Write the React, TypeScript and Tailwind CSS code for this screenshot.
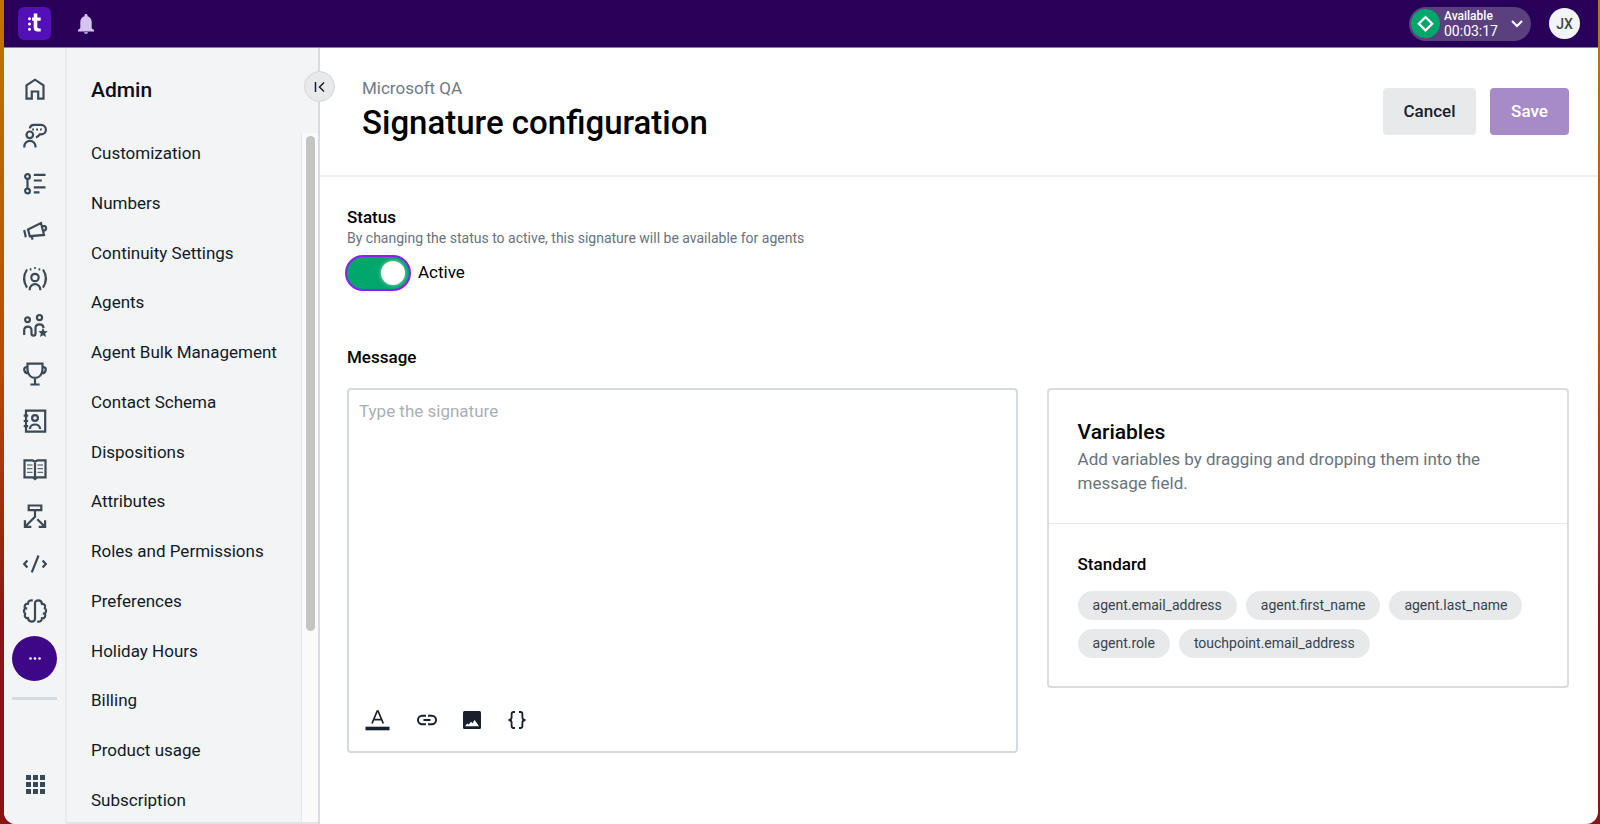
import React, { useState } from "react";

const navItems = [
    "Customization",
    "Numbers",
    "Continuity Settings",
    "Agents",
    "Agent Bulk Management",
    "Contact Schema",
    "Dispositions",
    "Attributes",
    "Roles and Permissions",
    "Preferences",
    "Holiday Hours",
    "Billing",
    "Product usage",
    "Subscription",
]

const variables = [
    "agent.email_address",
    "agent.first_name",
    "agent.last_name",
    "agent.role",
    "touchpoint.email_address",
]

// rail icons share a 24x24 box
const railIcons = [
    { label: "Home", icon: <path d="M3.5 21.7V8.4L12 2.7l8.5 5.7v13.3h-5.3v-7.2H8.8v7.2z" /> },
    {
        label: "Conversations",
        icon: (
            <>
                <circle cx="6.8" cy="10.8" r="3.3" />
                <path d="M1.3 23.4v-.9a5.6 5.6 0 0 1 11.2 0v.9" />
                <path d="M6.8 4.4C7.2 2 8.8.9 11 .9h7c2.8 0 4.900 2.100 4.900 4.800s-2.100 4.700-4.900 4.700h-1.200c-1 1.500-2.100 2.400-3.800 3" />
                <path d="M9.200 5.500h1.800M13.200 5.500h1.800M17 5.500h1.800" />
            </>
        ),
    },
    {
        label: "Flows",
        icon: (
            <>
                <circle cx="4.500" cy="4.500" r="2.400" />
                <circle cx="4.500" cy="19" r="2.400" />
                <path d="M4.500 7v9.500M10.800 2.900h11.700M10.800 8.500h8M10.800 15.400h11.700M10.800 20.300h5.700" />
            </>
        ),
    },
    {
        label: "Campaigns",
        icon: <path d="M1.200 11l1.600 7.200M5 10.400l13-6.300 3 11.800-14.200 1.300zM8.600 17.200l1 3.400M19 7.400c2-.9 4-.3 4.100 1.600.1 1.700-1.300 2.900-3.100 2.900" />,
    },
    {
        label: "Live",
        icon: (
            <>
                <circle cx="12" cy="10.500" r="3.700" />
                <path d="M6.700 23.300v-.8a5.300 5.300 0 0 1 10.600 0v.8M4 2.500C.4 8 .4 15 4 20.700M20 2.500c3.600 5.500 3.600 12.500 0 18.200" />
                <path d="M6.800 2.400h1.600M11.200 1h1.600M15.600 2.400h1.600" />
            </>
        ),
    },
    {
        label: "Community",
        icon: (
            <>
                <circle cx="4.500" cy="5.800" r="2.400" />
                <circle cx="16.500" cy="3.600" r="2.600" />
                <path d="M1.200 21v-4.700c0-5 7.300-5 7.300 0v3.200c0 2.900 4 2.900 4 0V14c0-4.800 8-4.800 8 0" />
                <path fill="currentColor" strokeWidth="0" d="M20 13.800l1.400 3.200 3.300.3-2.500 2.300.8 3.400-3-1.800-3 1.800.8-3.400-2.500-2.300 3.300-.3z" />
            </>
        ),
    },
    {
        label: "Performance",
        icon: <path d="M4.500 1.600h15v6c0 5-3.300 8.300-7.500 8.300S4.500 12.600 4.500 7.600zM12 16v6.500M7.400 22.500h9.200M4.500 5.200H3.200C1.600 5.200 1 6.700 1.300 8.200c.4 1.900 1.900 3.200 4.200 3M19.500 5.200h1.300c1.600 0 2.200 1.500 1.900 3-.4 1.900-1.900 3.200-4.200 3" />,
    },
    {
        label: "Contacts",
        icon: (
            <>
                <path d="M3 1.600h19.200v21H3z" />
                <circle cx="12" cy="9" r="2.900" />
                <path d="M6.900 20c.3-6 9.900-6 10.200 0M.7 6.600h4.500M.7 12h4.500M.7 17.200h4.500" />
            </>
        ),
    },
    {
        label: "Knowledge",
        icon: (
            <>
                <path d="M1.500 3.300h8l2.500 1.500 2.500-1.500h8v17H14L12 22l-2-1.700H1.500zM12 4.800v16.500" />
                <path strokeWidth="1" d="M4 8h5.500M4 11.700h5.500M4 15.300h5.500M14.500 8H20M14.500 11.700H20M14.500 15.300H20" />
            </>
        ),
    },
    {
        label: "Routing",
        icon: <path d="M5.700 1.500h12.600v4.700H5.700zM12 6.200v6.500L2.500 22.300M1.900 16.300v6.500h6.400M14.300 15.200l7.200 7.100M22.100 16.300v6.500h-6.400" />,
    },
    { label: "Developers", icon: <path d="M4.400 8.500L1.200 12l3.200 3.500M15.500 3.500L8.800 20.300M19.600 8.500l3.200 3.500-3.200 3.500" /> },
    {
        label: "AI",
        icon: <path d="M9.800 1.500C7 .8 4.900 2.200 5 4.700 2.300 4.400.8 7.200 2.200 9.400h2M2.200 9.400c-1.700 1.600-1.700 3.800 0 5.300-1.200 2.700.6 4.700 2.800 4.400.4 4.500 7 4.600 7 .6V4.300c0-4 6.600-3.900 7 .6 2.200-.3 4 1.700 2.800 4.400 1.700 1.500 1.700 3.700 0 5.300h-2M21.800 14.600c1.400 2.200-.1 5-2.800 4.700.1 2.500-2 3.900-4.800 3.200" />,
    },
]

function TopBar() {
    return (
        <header className="flex h-12 shrink-0 items-center justify-between border-b border-[#8d7ba8] bg-[#280059] pr-[18px] pl-[14px] text-white">
            <div className="flex items-center gap-[26px]">
                <a href="#" aria-label="Home" className="flex h-[33px] w-[33px] items-center justify-center rounded-md bg-[#5410b8]">
                    <svg viewBox="0 0 33 33" className="h-[33px] w-[33px]" fill="white">
                        <circle cx="11.500" cy="11.700" r="1.500" />
                        <circle cx="11.500" cy="17" r="1.500" />
                        <circle cx="11.500" cy="22.300" r="1.500" />
                        <path d="M15.700 6.500h3.600v4h3.400v3.200h-3.400v6.100c0 1.200.6 1.600 1.700 1.600h1.700v3.100h-2.900c-2.900 0-4.100-1.400-4.100-4v-6.800h-1.600v-3.200h1.600z" />
                    </svg>
                </a>
                <button type="button" aria-label="Notifications">
                    <svg viewBox="0 0 18 20" className="h-5 w-[18px]" fill="#d5c4f0">
                        <path d="M9 0c1 0 1.500.6 1.500 1.500v.7c2.700.8 4.200 3 4.200 5.900v6.100l2.300 1.800v1.600H1V16l2.300-1.800V8.100c0-2.900 1.500-5.100 4.200-5.900v-.7C7.500.6 8 0 9 0zM7 18.200h4c-.2 1-1 1.600-2 1.600s-1.800-.6-2-1.600z" />
                    </svg>
                </button>
            </div>
            <div className="flex items-center gap-[18px]">
                <button type="button" className="flex h-[34px] w-[122px] items-center rounded-full bg-[#5b407f] pr-2 pl-0.5 text-left">
                    <svg viewBox="0 0 29 29" className="mr-1 h-[29px] w-[29px]">
                        <circle cx="14.500" cy="14.500" r="14.500" fill="#00a66c" />
                        <path d="M14.500 8l6.700 6.700-6.700 6.700-6.700-6.700z" fill="none" stroke="white" strokeWidth="2.200" />
                    </svg>
                    <span className="flex-1">
                        <span className="block text-xs leading-[14px] font-medium">Available</span>
                        <span className="block text-sm leading-4">00:03:17</span>
                    </span>
                    <svg viewBox="0 0 12 8" className="h-2 w-3" fill="none" stroke="white" strokeWidth="2">
                        <path d="M1 1l5 5 5-5" />
                    </svg>
                </button>
                <button type="button" className="h-[31px] w-[31px] rounded-full bg-[#f2f4f6] text-sm font-medium text-[#3b4954]">JX</button>
            </div>
        </header>
    )
}

function Rail() {
    return (
        <nav aria-label="Apps" className="w-[63px] shrink-0 border-r-2 border-[#e8eaed] bg-[#f2f4f6] pt-[18px] text-[#3b4954]">
            <ul className="flex h-[615px] flex-col items-center justify-between">
                {railIcons.map((item) => (
                    <li key={item.label}>
                        <a href="#" aria-label={item.label} className="flex h-[45px] w-[45px] items-center justify-center">
                            <svg viewBox="0 0 24 24" className="h-6 w-6 overflow-visible" fill="none" stroke="currentColor" strokeWidth="2.2">
                                {item.icon}
                            </svg>
                        </a>
                    </li>
                ))}
                <li>
                    <button type="button" aria-label="More" className="flex h-[45px] w-[45px] items-center justify-center rounded-full bg-[#3e0788]">
                        <svg viewBox="0 0 12 4" className="h-1 w-3" fill="white">
                            <circle cx="1.500" cy="1.500" r="1.300" />
                            <circle cx="6" cy="1.500" r="1.300" />
                            <circle cx="10.500" cy="1.500" r="1.300" />
                        </svg>
                    </button>
                </li>
            </ul>
            <hr className="mx-2 mt-4 border-t-[3px] border-[#d6dbdf]" />
            <button type="button" aria-label="All apps" className="mt-[75px] ml-[22px] block">
                <svg viewBox="0 0 19 19" className="h-[19px] w-[19px]" fill="currentColor">
                    <path d="M0 0h5v5H0zM7 0h5v5H7zM14 0h5v5h-5zM0 7h5v5H0zM7 7h5v5H7zM14 7h5v5h-5zM0 14h5v5H0zM7 14h5v5H7zM14 14h5v5h-5z" />
                </svg>
            </button>
        </nav>
    )
}

function Sidebar() {
    return (
        <aside className="relative flex w-[253px] shrink-0 flex-col border-r-2 border-[#d9dbdf] bg-[#f2f4f6]">
            <h2 className="px-6 pt-7 pb-[29px] text-[21px] leading-7 font-medium text-[#07101c]">Admin</h2>
            <div className="flex flex-1 border-b-2 border-[#e2e4e7]">
                <ul className="flex h-[687px] flex-1 flex-col justify-between pt-2 pb-2 pl-6">
                    {navItems.map((item) => (
                        <li key={item}>
                            <a href="#" className="block text-[17px] leading-6 text-[#101a26]">{item}</a>
                        </li>
                    ))}
                </ul>
                <div className="w-[17px] border-l border-[#e6e7e9] bg-[#fafafa] pt-[3px] pl-1">
                    <div className="h-[495px] w-[9px] rounded-full bg-[#c4c4c4]" />
                </div>
            </div>
            <button type="button" aria-label="Collapse menu" className="absolute top-[23px] -right-[17px] z-10 flex h-[31px] w-[31px] items-center justify-center rounded-full border border-[#d5d7da] bg-[#e8e9eb]">
                <svg viewBox="0 0 12 12" className="h-3 w-3" fill="none" stroke="#17202b" strokeWidth="1.500">
                    <path d="M1.500 1v10M10 1.500L5.500 6l4.500 4.500" />
                </svg>
            </button>
        </aside>
    )
}

function Editor() {
    return (
        <div className="flex h-[365px] min-w-0 flex-9 flex-col rounded border-2 border-[#d5dadf]">
            <textarea id="message" placeholder="Type the signature" className="w-full flex-1 resize-none px-[10px] py-[9px] text-[17px] leading-6 outline-none placeholder:text-[#a9afb6]" />
            <div className="flex h-[62px] items-center pl-4 text-[#17202b]">
                <button type="button" aria-label="Text style" className="mr-[27px]">
                    <svg viewBox="0 0 25 22" className="h-[22px] w-[25px]" fill="none" stroke="currentColor">
                        <path strokeWidth="1.700" d="M7 14.500L12.200 2h.9l5.200 12.500M8.700 10.700h8" />
                        <path strokeWidth="3.600" d="M.5 19.500h24" />
                    </svg>
                </button>
                <button type="button" aria-label="Insert link" className="mr-[26px]">
                    <svg viewBox="0 0 20 12" className="h-3 w-5" fill="none" stroke="currentColor" strokeWidth="2">
                        <path d="M9 1.800H5.200a4.200 4.200 0 0 0 0 8.400H9M11 1.800h3.800a4.200 4.200 0 0 1 0 8.400H11M6.500 6h7" />
                    </svg>
                </button>
                <button type="button" aria-label="Insert image" className="mr-[27px]">
                    <svg viewBox="0 0 18 18" className="h-[18px] w-[18px]">
                        <rect width="18" height="18" rx="1.500" fill="currentColor" />
                        <path fill="white" d="M2 15.200l2.200-2.800 1.500 1 2.300-2.700 1.500 1.600 2-3.200 1.600 2 2.900 4.100z" />
                    </svg>
                </button>
                <button type="button" aria-label="Insert variable">
                    <svg viewBox="0 0 18 18" className="h-[18px] w-[18px]" fill="none" stroke="currentColor" strokeWidth="1.800">
                        <path d="M7 1H5.500C4.300 1 3.600 1.700 3.600 2.900v3.600C3.600 8.200 2.500 9 .5 9c2 0 3.100.8 3.100 2.500v3.600c0 1.200.7 1.900 1.900 1.900H7M11 1h1.500c1.200 0 1.900.7 1.900 1.900v3.600c0 1.700 1.100 2.500 3.100 2.500-2 0-3.100.8-3.100 2.500v3.600c0 1.200-.7 1.900-1.900 1.900H11" />
                    </svg>
                </button>
            </div>
        </div>
    )
}

function Variables() {
    return (
        <section className="min-w-0 flex-7 rounded border-2 border-[#d9dbdf]">
            <div className="border-b border-[#e6e7ea] px-[29px] pt-7 pb-7">
                <h3 className="text-[21px] leading-[29px] font-medium">Variables</h3>
                <p className="text-[17px] leading-6 text-[#69737d]">Add variables by dragging and dropping them into the message field.</p>
            </div>
            <div className="px-[29px] pt-7 pb-7">
                <h4 className="text-[17px] leading-6 font-medium">Standard</h4>
                <ul className="mt-[15px] flex flex-wrap gap-[9px]">
                    {variables.map((name) => (
                        <li key={name} draggable className="rounded-full bg-[#e8e9eb] px-[15px] text-sm leading-[29px] text-[#36434f]">{name}</li>
                    ))}
                </ul>
            </div>
        </section>
    )
}

function App() {
    const [active, setActive] = useState(true)

    return (
        <div className="flex min-h-screen bg-linear-to-b from-[#bd7800] via-[#b84a00] via-45% to-[#8a1414] to-75% pr-0.5 pl-1 font-['Roboto',sans-serif] text-black">
            <div className="flex min-w-0 flex-1 flex-col overflow-hidden rounded-b-xl bg-white">
                <TopBar />
                <div className="flex flex-1">
                    <Rail />
                    <Sidebar />
                    <main className="min-w-0 flex-1">
                        <div className="flex items-start justify-between border-b-2 border-[#f0f1f2] pt-7 pr-[29px] pb-[29px] pl-[42px]">
                            <div>
                                <p className="text-[17px] leading-6 text-[#717a83]">Microsoft QA</p>
                                <h1 className="text-[33px] leading-[46px] font-medium">Signature configuration</h1>
                            </div>
                            <div className="flex gap-[14px] pt-3">
                                <button type="button" className="h-[47px] w-[93px] rounded bg-[#e8e9eb] text-[17px] font-medium text-[#17202b]">Cancel</button>
                                <button type="button" className="h-[47px] w-[79px] rounded bg-[#a78bc9] text-[17px] font-medium text-white">Save</button>
                            </div>
                        </div>
                        <div className="pt-7 pr-[29px] pb-7 pl-[27px]">
                            <h2 className="text-[17px] leading-6 font-medium">Status</h2>
                            <p id="status-help" className="text-sm leading-[18px] text-[#69737d]">By changing the status to active, this signature will be available for agents</p>
                            <label className="mt-2 -ml-0.5 flex w-fit items-center gap-[7px] text-[17px]">
                                <input
                                    type="checkbox"
                                    role="switch"
                                    aria-describedby="status-help"
                                    checked={active}
                                    onChange={(e) => setActive(e.target.checked)}
                                    className="flex h-9 w-[66px] appearance-none items-center rounded-full border-2 border-[#8b1fee] bg-gray-400 px-1 outline-none before:block before:h-6 before:w-6 before:rounded-full before:bg-white before:shadow-[0_0_4px_rgba(255,255,255,0.6)] checked:justify-end checked:bg-[#00a66c]"
                                />
                                {active ? "Active" : "Inactive"}
                            </label>
                            <label htmlFor="message" className="mt-[54px] mb-[19px] block text-[17px] leading-6 font-medium">Message</label>
                            <div className="flex items-start gap-[29px]">
                                <Editor />
                                <Variables />
                            </div>
                        </div>
                    </main>
                </div>
            </div>
        </div>
    )
}

export default App
